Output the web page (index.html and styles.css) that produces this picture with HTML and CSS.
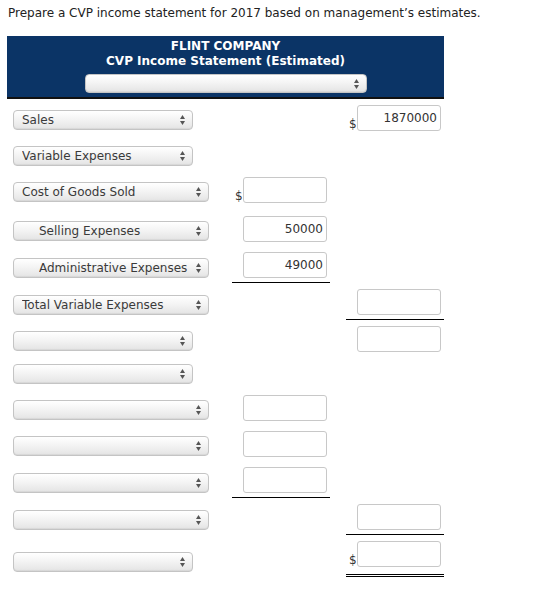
FILE: index.html
```html
<!DOCTYPE html>
<html lang="en">
<head>
<meta charset="utf-8">
<title>CVP Income Statement</title>
<link rel="stylesheet" href="styles.css">
</head>
<body>
<div class="page">
  <p class="prompt">Prepare a CVP income statement for 2017 based on management’s estimates.</p>

  <div class="statement">
    <div class="statement__head">
      <div class="statement__company">FLINT COMPANY</div>
      <div class="statement__title">CVP Income Statement (Estimated)</div>
      <div class="select select--head">
        <select><option></option></select>
        <svg class="select__arrows" viewBox="0 0 5 10" aria-hidden="true"><path d="M0 4L2.5 0L5 4Z M0 6L2.5 10L5 6Z"/></svg>
      </div>
    </div>

    <!-- 1 -->
    <div class="row">
      <div class="cell cell--label">
        <div class="select"><select><option>Sales</option></select><svg class="select__arrows" viewBox="0 0 5 10"><path d="M0 4L2.5 0L5 4Z M0 6L2.5 10L5 6Z"/></svg></div>
      </div>
      <div class="cell cell--amt"></div>
      <div class="cell cell--amt"><span class="cur">$</span><input class="amount" type="text" value="1870000"></div>
    </div>

    <!-- 2 -->
    <div class="row">
      <div class="cell cell--label">
        <div class="select"><select><option>Variable Expenses</option></select><svg class="select__arrows" viewBox="0 0 5 10"><path d="M0 4L2.5 0L5 4Z M0 6L2.5 10L5 6Z"/></svg></div>
      </div>
      <div class="cell cell--amt"></div>
      <div class="cell cell--amt"></div>
    </div>

    <!-- 3 -->
    <div class="row">
      <div class="cell cell--label">
        <div class="select select--wide"><select><option>Cost of Goods Sold</option></select><svg class="select__arrows" viewBox="0 0 5 10"><path d="M0 4L2.5 0L5 4Z M0 6L2.5 10L5 6Z"/></svg></div>
      </div>
      <div class="cell cell--amt"><span class="cur">$</span><input class="amount" type="text" value=""></div>
      <div class="cell cell--amt"></div>
    </div>

    <!-- 4 -->
    <div class="row row--spaced">
      <div class="cell cell--label">
        <div class="select select--wide select--indent"><select><option>Selling Expenses</option></select><svg class="select__arrows" viewBox="0 0 5 10"><path d="M0 4L2.5 0L5 4Z M0 6L2.5 10L5 6Z"/></svg></div>
      </div>
      <div class="cell cell--amt"><span class="cur"></span><input class="amount" type="text" value="50000"></div>
      <div class="cell cell--amt"></div>
    </div>

    <!-- 5 -->
    <div class="row">
      <div class="cell cell--label">
        <div class="select select--wide select--indent"><select><option>Administrative Expenses</option></select><svg class="select__arrows" viewBox="0 0 5 10"><path d="M0 4L2.5 0L5 4Z M0 6L2.5 10L5 6Z"/></svg></div>
      </div>
      <div class="cell cell--amt cell--rule"><span class="cur"></span><input class="amount" type="text" value="49000"></div>
      <div class="cell cell--amt"></div>
    </div>

    <!-- 6 -->
    <div class="row">
      <div class="cell cell--label">
        <div class="select select--wide"><select><option>Total Variable Expenses</option></select><svg class="select__arrows" viewBox="0 0 5 10"><path d="M0 4L2.5 0L5 4Z M0 6L2.5 10L5 6Z"/></svg></div>
      </div>
      <div class="cell cell--amt"></div>
      <div class="cell cell--amt cell--rule"><span class="cur"></span><input class="amount" type="text" value=""></div>
    </div>

    <!-- 7 -->
    <div class="row">
      <div class="cell cell--label">
        <div class="select"><select><option></option></select><svg class="select__arrows" viewBox="0 0 5 10"><path d="M0 4L2.5 0L5 4Z M0 6L2.5 10L5 6Z"/></svg></div>
      </div>
      <div class="cell cell--amt"></div>
      <div class="cell cell--amt"><span class="cur"></span><input class="amount" type="text" value=""></div>
    </div>

    <!-- 8 -->
    <div class="row row--compact">
      <div class="cell cell--label">
        <div class="select"><select><option></option></select><svg class="select__arrows" viewBox="0 0 5 10"><path d="M0 4L2.5 0L5 4Z M0 6L2.5 10L5 6Z"/></svg></div>
      </div>
      <div class="cell cell--amt"></div>
      <div class="cell cell--amt"></div>
    </div>

    <!-- 9 -->
    <div class="row">
      <div class="cell cell--label">
        <div class="select select--wide"><select><option></option></select><svg class="select__arrows" viewBox="0 0 5 10"><path d="M0 4L2.5 0L5 4Z M0 6L2.5 10L5 6Z"/></svg></div>
      </div>
      <div class="cell cell--amt"><span class="cur"></span><input class="amount" type="text" value=""></div>
      <div class="cell cell--amt"></div>
    </div>

    <!-- 10 -->
    <div class="row">
      <div class="cell cell--label">
        <div class="select select--wide"><select><option></option></select><svg class="select__arrows" viewBox="0 0 5 10"><path d="M0 4L2.5 0L5 4Z M0 6L2.5 10L5 6Z"/></svg></div>
      </div>
      <div class="cell cell--amt"><span class="cur"></span><input class="amount" type="text" value=""></div>
      <div class="cell cell--amt"></div>
    </div>

    <!-- 11 -->
    <div class="row">
      <div class="cell cell--label">
        <div class="select select--wide"><select><option></option></select><svg class="select__arrows" viewBox="0 0 5 10"><path d="M0 4L2.5 0L5 4Z M0 6L2.5 10L5 6Z"/></svg></div>
      </div>
      <div class="cell cell--amt cell--rule"><span class="cur"></span><input class="amount" type="text" value=""></div>
      <div class="cell cell--amt"></div>
    </div>

    <!-- 12 -->
    <div class="row">
      <div class="cell cell--label">
        <div class="select select--wide"><select><option></option></select><svg class="select__arrows" viewBox="0 0 5 10"><path d="M0 4L2.5 0L5 4Z M0 6L2.5 10L5 6Z"/></svg></div>
      </div>
      <div class="cell cell--amt"></div>
      <div class="cell cell--amt cell--rule"><span class="cur"></span><input class="amount" type="text" value=""></div>
    </div>

    <!-- 13 -->
    <div class="row">
      <div class="cell cell--label">
        <div class="select"><select><option></option></select><svg class="select__arrows" viewBox="0 0 5 10"><path d="M0 4L2.5 0L5 4Z M0 6L2.5 10L5 6Z"/></svg></div>
      </div>
      <div class="cell cell--amt"></div>
      <div class="cell cell--amt cell--total"><span class="cur">$</span><input class="amount" type="text" value=""></div>
    </div>
  </div>
</div>
</body>
</html>
```

FILE: styles.css
```css
* { box-sizing: border-box; }

html, body {
  margin: 0;
  background: #fff;
}

body {
  font-family: "DejaVu Sans", Verdana, sans-serif;
  color: #333;
}

.page {
  padding: 6px 0 0 7px;
}

.prompt {
  margin: 0 0 15px 1px;
  font-size: 12px;
  line-height: 15px;
  color: #222;
}

.statement {
  width: 437px;
}

.statement__head {
  background: #0b3466;
  border-bottom: 2px solid #111;
  padding: 3px 0 4px;
  display: flex;
  flex-direction: column;
  align-items: center;
  color: #fff;
  font-weight: bold;
  font-size: 12px;
  line-height: 15px;
}

.statement__company,
.statement__title {
  text-align: center;
}

.select {
  position: relative;
  width: 180px;
  height: 20px;
}

.select--wide { width: 196px; }

.select--head {
  width: 282px;
  margin-top: 5px;
  height: 19px;
}

.select select {
  appearance: none;
  -webkit-appearance: none;
  display: block;
  width: 100%;
  height: 100%;
  margin: 0;
  padding: 0 18px 0 8px;
  border: 1px solid #c4c4c4;
  border-radius: 4px;
  background: linear-gradient(#ffffff 0%, #f4f4f4 45%, #e4e4e4 100%);
  box-shadow: inset 0 -1px 1px rgba(0, 0, 0, 0.06);
  font-family: "DejaVu Sans", Verdana, sans-serif;
  font-size: 12px;
  color: #3a3a3a;
}

.select--indent select {
  padding-left: 25px;
}

.select__arrows {
  position: absolute;
  right: 8px;
  top: 50%;
  width: 5px;
  height: 10px;
  margin-top: -5px;
  fill: #555;
}

.row {
  display: grid;
  grid-template-columns: 225px 114px 98px;
  align-items: end;
  padding-top: 6px;
}

.row--spaced { padding-top: 9px; }
.row--compact { padding-top: 3px; }

.cell {
  min-height: 30px;
}

.cell--label {
  padding: 0 0 5px 6px;
  display: flex;
  align-items: flex-end;
}

.cell--amt {
  width: 98px;
  display: flex;
  align-items: flex-end;
  padding: 0 0 4px 3px;
}

.cell--rule {
  border-bottom: 1px solid #000;
}

.cell--total {
  border-bottom: 3px double #000;
  padding-bottom: 7px;
}

.cur {
  flex: 0 0 8px;
  font-size: 12px;
  line-height: 12px;
  color: #333;
  margin-bottom: 1px;
}

.amount {
  width: 84px;
  height: 26px;
  margin: 0;
  padding: 0 3px 0 3px;
  border: 1px solid #c8c8c8;
  border-radius: 3px;
  background: #fff;
  text-align: right;
  font-family: "DejaVu Sans", Verdana, sans-serif;
  font-size: 12px;
  color: #333;
  outline: none;
}
```
